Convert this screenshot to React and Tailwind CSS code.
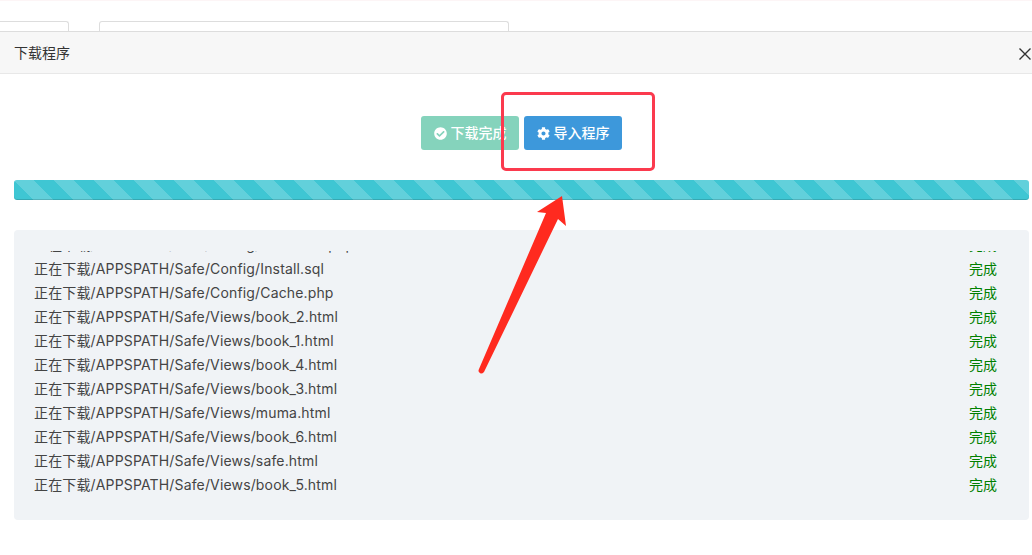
import { FaCheckCircle, FaCog } from 'react-icons/fa'

const FONT = "font-['Inter','Noto_Sans_CJK_SC',sans-serif]"

const files = [
  'Config/Install.sql',
  'Config/Cache.php',
  'Views/book_2.html',
  'Views/book_1.html',
  'Views/book_4.html',
  'Views/book_3.html',
  'Views/muma.html',
  'Views/book_6.html',
  'Views/safe.html',
  'Views/book_5.html',
]

function Row({ path }) {
  return (
    <div className="flex h-6 items-center justify-between">
      <span className="tracking-[0.15px]">正在下载/APPSPATH/Safe/{path}</span>
      <span className="text-[#008000]">完成</span>
    </div>
  )
}

export default function App() {
  return (
    <div className={`relative h-[555px] w-[1032px] overflow-hidden bg-white text-sm text-[#444] ${FONT}`}>
      {/* tabs behind the dialog */}
      <div className="flex h-[31px] items-end gap-[30px] border-t border-[#fdf5f6]">
        <div className="h-[10px] w-[69px] rounded-tr-[3px] border-t border-r border-[#ddd]" />
        <div className="h-[10px] w-[410px] rounded-t-[3px] border-x border-t border-[#ddd]" />
      </div>

      <div className="flex h-[43px] items-center justify-between border-y border-t-[#ddd] border-b-[#e8e8e8] bg-[#f7f7f7] pl-[14px] pr-px">
        <span className="text-[#333]">下载程序</span>
        <svg width="12" height="12" viewBox="0 0 12 12" className="mt-[2px] text-[#333]">
          <path d="M.5.5l11 11M11.5.5l-11 11" stroke="currentColor" strokeWidth="1.4" fill="none" />
        </svg>
      </div>

      <div className="px-[14px] pr-[3px]">
        <div className="flex justify-center gap-[5px] pt-[42px]">
          <button className="flex h-[34px] w-[98px] items-center justify-center gap-1 rounded-[3px] bg-[#85d3bc] font-medium text-white">
            <FaCheckCircle className="size-[13px]" />
            下载完成
          </button>
          <button className="flex h-[34px] w-[98px] items-center justify-center gap-1 rounded-[3px] bg-[#3d98db] font-medium text-white">
            <FaCog className="size-[13px]" />
            导入程序
          </button>
        </div>

        <div className="mt-[30px] h-5 rounded-[3px] bg-[#3fc6d3] bg-[linear-gradient(45deg,rgba(255,255,255,.18)_25%,transparent_25%,transparent_50%,rgba(255,255,255,.18)_50%,rgba(255,255,255,.18)_75%,transparent_75%,transparent)] bg-[length:40px_40px] shadow-[inset_0_-1px_0_rgba(0,0,0,.15)]" />

        <div className="mt-[30px] h-[290px] rounded-[4px] bg-[#f0f3f6] pl-5 pr-8 pt-[21px]">
          <div className="h-[246px] overflow-hidden">
            <div className="-mt-[18px]">
              <Row path="Config/Database.php" />
              {files.map((f) => (
                <Row key={f} path={f} />
              ))}
            </div>
          </div>
        </div>
      </div>

      {/* annotation: red frame and arrow over the dialog */}
      <div className="absolute left-[501px] top-[92px] h-[79px] w-[154px] rounded-[5px] border-[3px] border-[#fb3a4e]" />
      <svg className="absolute left-0 top-0" width="1032" height="555" viewBox="0 0 1032 555">
        <path
          d="M562 196L566 226L558 219L484 372Q481 375 479 372Q478 371 479 369L546 213L537 212Z"
          fill="#ff2a1f"
        />
      </svg>
    </div>
  )
}
